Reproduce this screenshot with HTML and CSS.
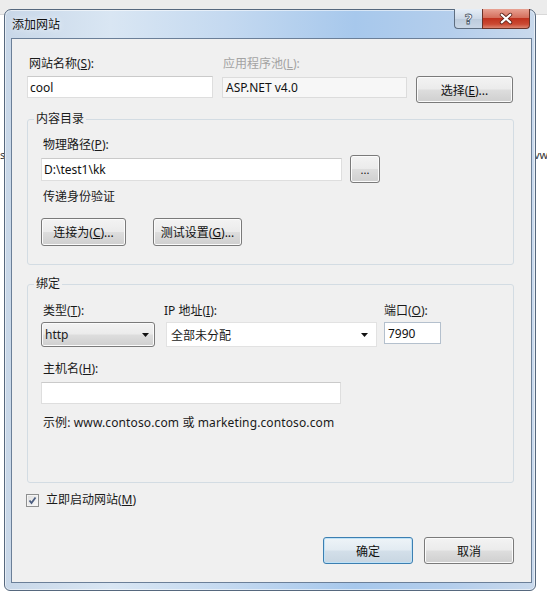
FILE: index.html
```html
<!DOCTYPE html>
<html lang="zh-CN">

<head>
    <meta charset="UTF-8">
    <meta name="viewport" content="width=device-width, initial-scale=1.0">
    <title>添加网站</title>
    <link rel="stylesheet" href="styles.css">
</head>

<body>
    <div class="desk">
        <div class="desk-bar"></div>
        <span class="desk-text desk-left">s.</span>
        <span class="desk-text desk-right">vw</span>
    </div>

    <div class="window">
        <div class="titlebar">
            <span class="title">添加网站</span>
            <div class="caption-buttons">
                <button class="cap cap-help">?</button>
                <button class="cap cap-close">
                    <svg width="48" height="20" viewBox="0 0 48 20">
                        <path d="M19.5 5.5 L28.5 13.5 M28.5 5.5 L19.5 13.5" stroke="#5a2118" stroke-width="4" stroke-linecap="round" fill="none" />
                        <path d="M19.5 5.5 L28.5 13.5 M28.5 5.5 L19.5 13.5" stroke="#fff" stroke-width="2.2" stroke-linecap="round" fill="none" />
                    </svg>
                </button>
            </div>
        </div>

        <div class="client">
            <div class="site-row">
                <label class="lbl">网站名称(<u>S</u>):</label>
                <label class="lbl lbl-off">应用程序池(<u>L</u>):</label>
                <span></span>
                <input class="field" type="text" value="cool">
                <div class="field field-ro">ASP.NET v4.0</div>
                <button class="btn">选择(<u>E</u>)...</button>
            </div>

            <fieldset class="group group-content">
                <legend>内容目录</legend>
                <div class="group-body">
                    <label class="lbl">物理路径(<u>P</u>):</label>
                    <div class="path-row">
                        <input class="field path" type="text" value="D:\test1\kk">
                        <button class="btn btn-dots">...</button>
                    </div>
                    <div class="lbl pass">传递身份验证</div>
                    <div class="btn-row">
                        <button class="btn btn-connect">连接为(<u>C</u>)...</button>
                        <button class="btn btn-test">测试设置(<u>G</u>)...</button>
                    </div>
                </div>
            </fieldset>

            <fieldset class="group group-bind">
                <legend>绑定</legend>
                <div class="group-body">
                    <div class="bind-grid">
                        <label class="lbl">类型(<u>T</u>):</label>
                        <label class="lbl lbl-ip">IP 地址(<u>I</u>):</label>
                        <label class="lbl lbl-port">端口(<u>O</u>):</label>
                        <div class="combo combo-type">
                            <span>http</span>
                            <svg width="7" height="4" viewBox="0 0 7 4"><path d="M0 0 H7 L3.5 4 Z" fill="#111" /></svg>
                        </div>
                        <div class="combo combo-ip">
                            <span>全部未分配</span>
                            <svg width="7" height="4" viewBox="0 0 7 4"><path d="M0 0 H7 L3.5 4 Z" fill="#111" /></svg>
                        </div>
                        <input class="field port" type="text" value="7990">
                    </div>
                    <label class="lbl host-lbl">主机名(<u>H</u>):</label>
                    <input class="field host" type="text" value="">
                    <div class="lbl example">示例: www.contoso.com 或 marketing.contoso.com</div>
                </div>
            </fieldset>

            <div class="check-row">
                <span class="checkbox">
                    <svg width="11" height="11" viewBox="0 0 11 11"><path d="M2.5 5.5 L4.5 8 L8.5 2.5" stroke="#4b5d80" stroke-width="1.8" fill="none" /></svg>
                </span>
                <span class="lbl">立即启动网站(<u>M</u>)</span>
            </div>

            <div class="footer">
                <button class="btn btn-ok">确定</button>
                <button class="btn btn-cancel">取消</button>
            </div>
        </div>
    </div>
</body>

</html>
```

FILE: styles.css
```css
* {
    box-sizing: border-box;
}

body {
    margin: 0;
    background: #fff;
    font-family: "Noto Sans", "Noto Sans CJK SC", sans-serif;
    font-size: 12px;
    color: #1a1a1a;
}

/* page behind the dialog */
.desk-bar {
    height: 15px;
    background: #ececec;
    border-bottom: 1px solid #d8d8d8;
}

.desk-text {
    position: absolute;
    top: 147px;
    font-size: 11px;
    color: #333;
}

.desk-left {
    left: 0;
}

.desk-right {
    left: 534px;
}

/* window frame */
.window {
    position: absolute;
    left: 4px;
    top: 9px;
    width: 532px;
    height: 582px;
    display: flex;
    flex-direction: column;
    border: 1px solid #56687e;
    border-radius: 7px 7px 6px 6px;
    background: linear-gradient(90deg, #c8d7e8 0%, #d9e6f3 20%, #c4d9f0 42%, #a7c8ec 66%, #b4ceec 84%, #c9d9ec 100%);
    box-shadow: inset 0 0 0 1px rgba(255, 255, 255, 0.55);
}

.titlebar {
    height: 28px;
    display: flex;
    align-items: center;
    padding: 0 5px 0 7px;
}

.title {
    font-size: 12px;
    color: #111;
    text-shadow: 0 0 6px #fff;
}

.caption-buttons {
    margin-left: auto;
    align-self: flex-start;
    margin-top: -1px;
    display: flex;
}

.cap {
    height: 20px;
    padding: 0;
    border: 1px solid #5d6d80;
    border-top: none;
    display: flex;
    align-items: center;
    justify-content: center;
}

.cap-help {
    width: 28px;
    border-right: none;
    border-radius: 0 0 0 4px;
    background: linear-gradient(#e6eef7, #cdd9e7 50%, #bccbdc 51%, #cad7e6);
    font-family: "DejaVu Sans", sans-serif;
    font-size: 14px;
    font-weight: bold;
    color: #fff;
    -webkit-text-stroke: 0.8px #4a5767;
    line-height: 18px;
}

.cap-close {
    width: 48px;
    border-color: #6b3328;
    border-radius: 0 0 4px 0;
    background: linear-gradient(#e8a293, #d5705d 45%, #c0321e 50%, #cb4a33 80%, #dc8570);
}

/* client area */
.client {
    flex: 1;
    margin: 0 3px 7px 6px;
    border: 1px solid #6b7f98;
    background: #f0f0f0;
    padding: 17px 17px 0 15px;
}

.lbl {
    display: block;
    line-height: 16px;
    padding-left: 2px;
    white-space: nowrap;
}

.lbl-off {
    color: #a3a3a3;
    padding-left: 1px;
}

.field {
    height: 22px;
    font: inherit;
    color: #111;
    background: #fff;
    border: 1px solid #dedede;
    border-top-color: #cacaca;
    padding: 0 2px;
    outline: none;
}

.field-ro {
    height: 21px;
    margin-top: 1px;
    background: #f7f7f7;
    border-color: #dcdcdc;
    line-height: 19px;
    padding-left: 3px;
}

.btn {
    font: inherit;
    color: #111;
    height: 27px;
    padding: 0;
    border: 1px solid #7a7a7a;
    border-radius: 3px;
    background: linear-gradient(#f3f3f3 0%, #ebebeb 48%, #dddddd 52%, #cfcfcf 100%);
    box-shadow: inset 0 0 0 1px #fbfbfb;
}

.site-row {
    display: grid;
    grid-template-columns: 186px 185px 97px;
    column-gap: 9px;
    row-gap: 4px;
    align-items: start;
}

/* group boxes */
.group {
    margin: 8px 0 0;
    padding: 0 6px 18px;
    border: 1px solid #d3dce3;
    border-radius: 3px;
    min-width: 0;
}

.group legend {
    padding: 0 2px;
    line-height: 16px;
}

.group-body {
    padding: 10px 0 0 7px;
}

.path-row {
    display: flex;
    align-items: center;
    gap: 8px;
    margin-top: 2px;
}

.path {
    width: 301px;
    height: 23px;
}

.btn-dots {
    width: 30px;
    height: 28px;
    font-size: 11px;
}

.pass {
    margin-top: 6px;
}

.btn-row {
    display: flex;
    gap: 27px;
    margin-top: 13px;
}

.btn-connect {
    width: 85px;
    height: 28px;
}

.btn-test {
    width: 89px;
    height: 28px;
}

.group-bind {
    margin-top: 11px;
    padding-bottom: 51px;
}

.group-bind .group-body {
    padding-top: 11px;
}

.bind-grid {
    display: grid;
    grid-template-columns: 125px 218px 57px;
    row-gap: 3px;
    align-items: start;
}

.lbl-ip {
    padding-left: 0;
    margin-left: -2px;
}

.lbl-port {
    padding-left: 0;
}

.combo {
    height: 25px;
    display: flex;
    align-items: center;
    justify-content: space-between;
}

.combo-type {
    width: 114px;
    padding: 0 5px 0 3px;
    border: 1px solid #7a7a7a;
    border-radius: 3px;
    background: linear-gradient(#f3f3f3 0%, #ebebeb 48%, #dddddd 52%, #cfcfcf 100%);
    box-shadow: inset 0 0 0 1px #fbfbfb;
}

.combo-ip {
    width: 211px;
    padding: 0 8px 0 4px;
    background: #fff;
    border: 1px solid #e2e2e2;
}

.port {
    width: 57px;
    border-color: #b4c0cd;
    padding-left: 3px;
}

.host-lbl {
    margin-top: 14px;
}

.host {
    width: 300px;
    margin-top: 5px;
    display: block;
}

.example {
    margin-top: 11px;
    letter-spacing: 0.12px;
}

/* bottom */
.check-row {
    display: flex;
    align-items: center;
    gap: 5px;
    margin-top: 9px;
    margin-left: -1px;
}

.checkbox {
    width: 13px;
    height: 13px;
    border: 1px solid #8e8f8f;
    background: linear-gradient(135deg, #dcdcdc, #fbfbfb);
    box-shadow: inset 0 0 0 1px #f4f4f4;
    display: flex;
    align-items: center;
    justify-content: center;
}

.footer {
    display: flex;
    justify-content: flex-end;
    gap: 11px;
    margin-top: 29px;
}

.btn-ok,
.btn-cancel {
    width: 90px;
}

.btn-ok {
    border-color: #3c7fb1;
    background: linear-gradient(#eef4f8 0%, #e2ebf2 48%, #d3dfe9 52%, #c8d6e2 100%);
    box-shadow: inset 0 0 0 1px #bfe2f7;
}
```
